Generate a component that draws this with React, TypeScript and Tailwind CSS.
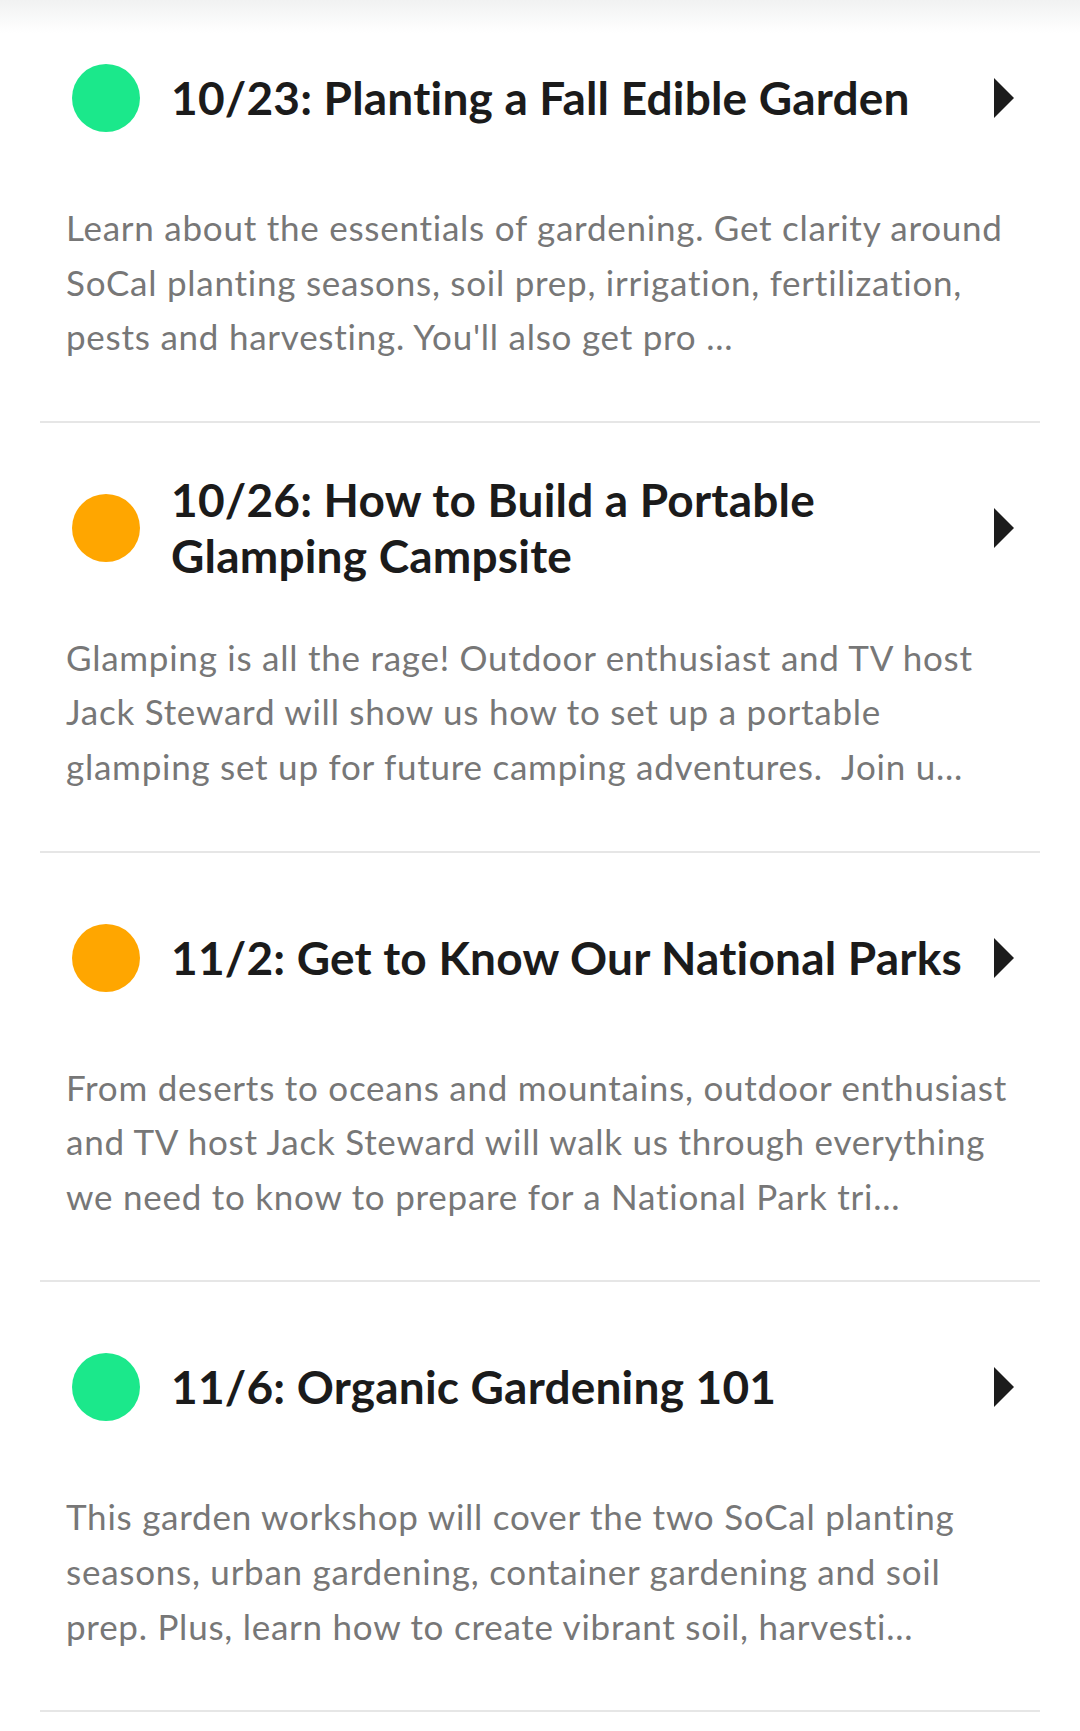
import React from "react";

type Item = { color: string; title: string[]; desc: string[] };

const items: Item[] = [
  {
    color: "green",
    title: ["10/23: Planting a Fall Edible Garden"],
    desc: [
      "Learn about the essentials of gardening. Get clarity around",
      "SoCal planting seasons, soil prep, irrigation, fertilization,",
      "pests and harvesting. You'll also get pro ...",
    ],
  },
  {
    color: "orange",
    title: ["10/26: How to Build a Portable", "Glamping Campsite"],
    desc: [
      "Glamping is all the rage! Outdoor enthusiast and TV host",
      "Jack Steward will show us how to set up a portable",
      "glamping set up for future camping adventures.\u00a0 Join u...",
    ],
  },
  {
    color: "orange",
    title: ["11/2: Get to Know Our National Parks"],
    desc: [
      "From deserts to oceans and mountains, outdoor enthusiast",
      "and TV host Jack Steward will walk us through everything",
      "we need to know to prepare for a National Park tri...",
    ],
  },
  {
    color: "green",
    title: ["11/6: Organic Gardening 101"],
    desc: [
      "This garden workshop will cover the two SoCal planting",
      "seasons, urban gardening, container gardening and soil",
      "prep. Plus, learn how to create vibrant soil, harvesti...",
    ],
  },
];

function Row({ item, first }: { item: Item; first: boolean }) {
  return (
    <div className={`border-b-2 border-[#e6e6e6] pb-[57px] ${first ? "pt-0" : "pt-[40px]"}`}>
      <div className="flex h-[130px] items-center pl-[32px] pr-[26px]">
        <div
          className={`h-[68px] w-[68px] shrink-0 rounded-full ${
            item.color === "green" ? "bg-[#1be88b]" : "bg-[#ffa600]"
          }`}
        />
        <div className="ml-[31px] flex-1 text-[46px] font-bold leading-[56px] tracking-[0.2px] text-[#1b1b1b]">
          {item.title.map((t, i) => (
            <div key={i} className="whitespace-nowrap">
              {t}
            </div>
          ))}
        </div>
        <svg width="20" height="40" viewBox="0 0 20 40" className="shrink-0">
          <polygon points="0,0 20,20 0,40" fill="#1c1c1c" />
        </svg>
      </div>
      <div className="mt-[37px] pl-[26px] text-[35px] leading-[54.6px] tracking-[0.75px] text-[#777777]">
        {item.desc.map((d, i) => (
          <div key={i} className="whitespace-nowrap">
            {d}
          </div>
        ))}
      </div>
    </div>
  );
}

export default function App() {
  return (
    <div
      className="min-h-[1731px] w-[1080px] bg-white"
      style={{ fontFamily: "Lato, 'Noto Sans', sans-serif" }}
    >
      <div className="h-[33px] bg-gradient-to-b from-[#f1f2f2] to-white" />
      <div className="mx-[40px]">
        {items.map((it, i) => (
          <Row key={i} item={it} first={i === 0} />
        ))}
      </div>
    </div>
  );
}
